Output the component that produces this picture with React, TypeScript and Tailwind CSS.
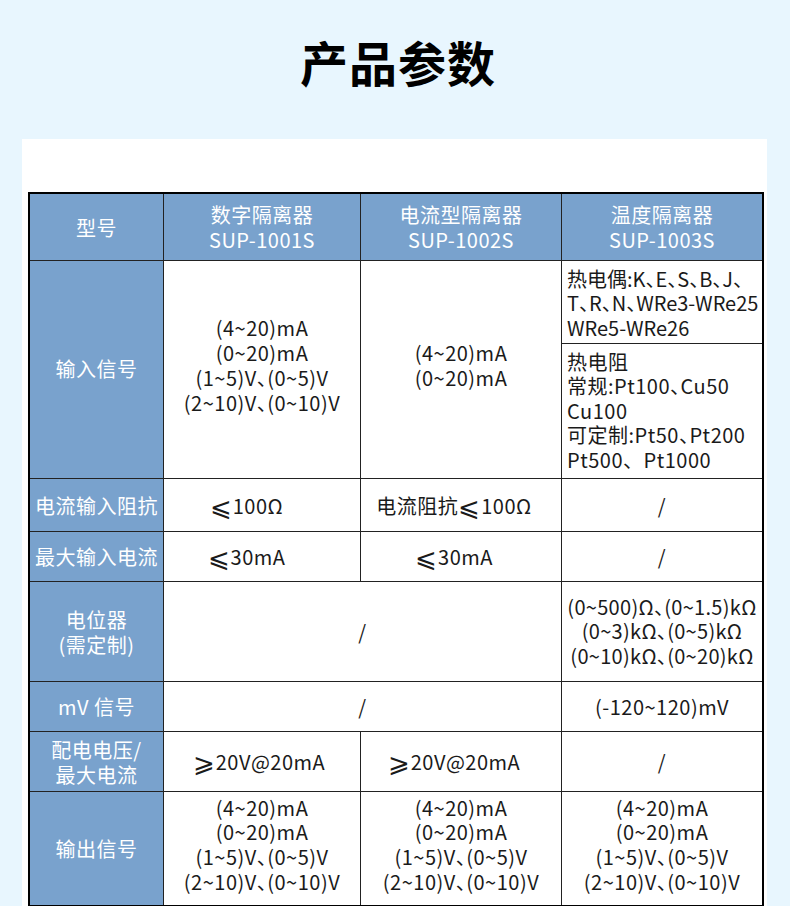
import React from "react";

const font = { fontFamily: '"Noto Sans CJK SC", "Noto Sans", "DejaVu Sans", sans-serif' };

function Head({ children, className = "" }: { children: React.ReactNode; className?: string }) {
  return (
    <div className={`bg-[#79a2cd] text-white flex flex-col items-center justify-center text-center ${className}`}>
      {children}
    </div>
  );
}

function Cell({ children, className = "" }: { children: React.ReactNode; className?: string }) {
  return (
    <div className={`bg-white text-[#1a1a1a] flex flex-col items-center justify-center text-center whitespace-nowrap ${className}`}>
      {children}
    </div>
  );
}

function Le() {
  return (
    <span className="text-[26px] leading-[20px] align-[-2px] tracking-[0px] font-extralight pr-[1px] [font-family:'DejaVu_Sans',sans-serif]">
      ⩽
    </span>
  );
}
function Ge() {
  return (
    <span className="text-[26px] leading-[20px] align-[-2px] tracking-[0px] font-extralight pr-[1px] [font-family:'DejaVu_Sans',sans-serif]">
      ⩾
    </span>
  );
}

const sig = ["(4~20)mA", "(0~20)mA", "(1~5)V、(0~5)V", "(2~10)V、(0~10)V"];

export default function App() {
  return (
    <div
      className="w-[790px] h-[906px] overflow-hidden bg-[#e8f6fe] text-[20px] leading-[25px] tracking-[0.5px] [font-feature-settings:'halt']"
      style={font}
    >
      <div className="h-[139px] flex items-center justify-center pb-[18px] pl-[6px]">
        <h1 className="text-[48px] leading-[56px] font-bold text-black tracking-[1px]">产品参数</h1>
      </div>
      <div className="ml-[22px] mr-[23px] bg-white pt-[53px] pl-[6px] pr-[1px] h-[800px]">
        <div className="border-2 border-black bg-[#222] w-[736px]">
          <div className="grid grid-cols-[133px_196px_200px_200px] grid-rows-[66px_82px_134px_52px_49px_99px_49px_59px_113px] gap-px">
            <Head>型号</Head>
            <Head>
              <div>数字隔离器</div>
              <div>SUP-1001S</div>
            </Head>
            <Head>
              <div>电流型隔离器</div>
              <div>SUP-1002S</div>
            </Head>
            <Head>
              <div>温度隔离器</div>
              <div>SUP-1003S</div>
            </Head>

            <Head className="row-span-2 pb-[3px]">输入信号</Head>
            <Cell className="row-span-2 pb-[9px]">
              {sig.map((s) => (
                <div key={s}>{s}</div>
              ))}
            </Cell>
            <Cell className="row-span-2 pb-[9px]">
              <div>(4~20)mA</div>
              <div>(0~20)mA</div>
            </Cell>
            <div className="bg-white text-[#1a1a1a] flex flex-col justify-center pl-[5px] pt-[3px] leading-[24.5px] whitespace-nowrap tracking-[0px]">
              <div>热电偶:K、E、S、B、J、</div>
              <div>T、R、N、WRe3-WRe25</div>
              <div>WRe5-WRe26</div>
            </div>
            <div className="bg-white text-[#1a1a1a] flex flex-col justify-center pl-[5px] leading-[24.6px] whitespace-nowrap">
              <div>热电阻</div>
              <div>常规:Pt100、Cu50</div>
              <div>Cu100</div>
              <div>可定制:Pt50、Pt200</div>
              <div>
                Pt500<span className="[font-feature-settings:normal]">、</span>Pt1000
              </div>
            </div>

            <Head>电流输入阻抗</Head>
            <Cell>
              <div className="pr-[31px]">
                <Le />100Ω
              </div>
            </Cell>
            <Cell>
              <div className="pr-[14px]">
                电流阻抗<Le />100Ω
              </div>
            </Cell>
            <Cell>/</Cell>

            <Head>最大输入电流</Head>
            <Cell>
              <div className="pr-[31px]">
                <Le />30mA
              </div>
            </Cell>
            <Cell>
              <div className="pr-[14px]">
                <Le />30mA
              </div>
            </Cell>
            <Cell>/</Cell>

            <Head>
              <div>电位器</div>
              <div>(需定制)</div>
            </Head>
            <Cell className="col-span-2">/</Cell>
            <Cell className="tracking-[0.3px] leading-[24.5px]">
              <div>(0~500)Ω、(0~1.5)kΩ</div>
              <div>(0~3)kΩ、(0~5)kΩ</div>
              <div>(0~10)kΩ、(0~20)kΩ</div>
            </Cell>

            <Head>mV 信号</Head>
            <Cell className="col-span-2">/</Cell>
            <Cell>(-120~120)mV</Cell>

            <Head>
              <div>配电电压/</div>
              <div>最大电流</div>
            </Head>
            <Cell>
              <div className="pr-[6px]">
                <Ge />20V@20mA
              </div>
            </Cell>
            <Cell>
              <div className="pr-[14px]">
                <Ge />20V@20mA
              </div>
            </Cell>
            <Cell>/</Cell>

            <Head>输出信号</Head>
            {[0, 1, 2].map((i) => (
              <Cell key={i} className="pb-[7px] leading-[24.7px]">
                {sig.map((s) => (
                  <div key={s}>{s}</div>
                ))}
              </Cell>
            ))}
          </div>
        </div>
      </div>
    </div>
  );
}
